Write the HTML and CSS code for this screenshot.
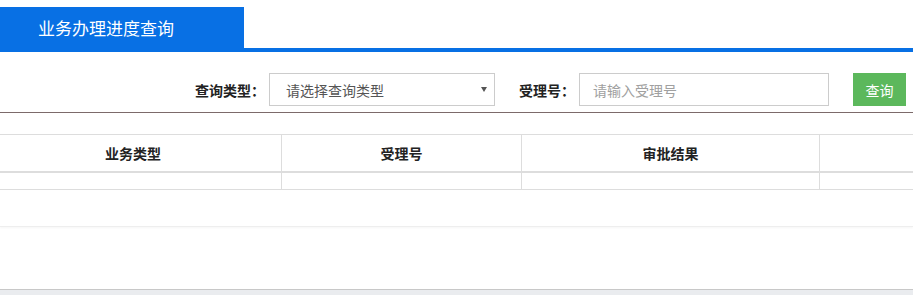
FILE: index.html
```html
<!DOCTYPE html>
<html lang="zh-CN">

<head>
    <meta charset="UTF-8">
    <meta name="viewport" content="width=device-width, initial-scale=1.0">
    <title>业务办理进度查询</title>
    <link rel="stylesheet" href="styles.css">
</head>

<body>
    <div class="page">
        <div class="tab-bar">
            <div class="tab-title">业务办理进度查询</div>
        </div>

        <form class="search-bar" id="search-form">
            <label class="search-label" for="type">查询类型：</label>
            <div class="select-box">
                <select id="type" class="select">
                    <option value="">请选择查询类型</option>
                </select>
            </div>
            <label class="search-label label-gap" for="no">受理号：</label>
            <input type="text" id="no" class="text-input" placeholder="请输入受理号">
            <button type="submit" class="btn-search">查询</button>
        </form>

        <table class="result-table">
            <thead>
                <tr>
                    <th class="col-type">业务类型</th>
                    <th class="col-no">受理号</th>
                    <th class="col-result">审批结果</th>
                    <th></th>
                </tr>
            </thead>
            <tbody>
                <tr>
                    <td></td>
                    <td></td>
                    <td></td>
                    <td></td>
                </tr>
            </tbody>
        </table>

        <div class="pager"></div>
        <div class="footer"></div>
    </div>
</body>

</html>
```

FILE: styles.css
```css
body {
    margin: 0;
    padding: 0;
    font-family: "Noto Sans CJK SC", "Liberation Sans", sans-serif;
    font-size: 14px;
    color: #333;
    background-color: #fff;
}

.page {
    display: flex;
    flex-direction: column;
    height: 295px;
    overflow: hidden;
}

.tab-bar {
    padding-top: 7px;
    border-bottom: 4px solid #0870e4;
}

.tab-title {
    width: 244px;
    height: 41px;
    box-sizing: border-box;
    padding-left: 38px;
    background-color: #0870e4;
    color: #fff;
    font-size: 17px;
    line-height: 41px;
}

.search-bar {
    display: flex;
    justify-content: flex-end;
    align-items: center;
    padding: 21px 7px 6px 0;
    border-bottom: 1px solid #7c6a6a;
}

.search-label {
    font-weight: bold;
    color: #222;
    margin-right: 4px;
}

.label-gap {
    margin-left: 24px;
}

.select-box {
    position: relative;
    width: 226px;
    height: 33px;
}

.select-box::after {
    content: "";
    position: absolute;
    right: 8px;
    top: 14px;
    border-left: 3px solid transparent;
    border-right: 3px solid transparent;
    border-top: 5px solid #555;
}

.select {
    appearance: none;
    -webkit-appearance: none;
    width: 100%;
    height: 33px;
    padding: 0 0 0 16px;
    border: 1px solid #ccc;
    background-color: #fff;
    font-family: inherit;
    font-size: 14px;
    color: #555;
}

.text-input {
    width: 250px;
    height: 33px;
    box-sizing: border-box;
    padding: 0 13px;
    border: 1px solid #ccc;
    font-family: inherit;
    font-size: 14px;
}

.text-input::placeholder {
    color: #a0a0a0;
}

.btn-search {
    width: 53px;
    height: 33px;
    margin-left: 24px;
    border: none;
    background-color: #5cb85c;
    color: #fff;
    font-family: inherit;
    font-size: 14px;
    cursor: pointer;
}

.result-table {
    width: 100%;
    margin-top: 21px;
    border-collapse: collapse;
    table-layout: fixed;
}

.result-table th,
.result-table td {
    border: 1px solid #ddd;
    padding: 0;
}

.result-table th {
    height: 36px;
    border-bottom: 2px solid #ddd;
    font-weight: bold;
    color: #222;
}

.result-table td {
    height: 16px;
}

.result-table th:first-child,
.result-table td:first-child {
    border-left: none;
}

.result-table th:last-child,
.result-table td:last-child {
    border-right: none;
}

.col-type {
    width: 266px;
}

.result-table th.col-type {
    padding-right: 15px;
}

.col-no {
    width: 239px;
}

.col-result {
    width: 297px;
}

.pager {
    height: 36px;
    border-bottom: 1px solid #eee;
    box-shadow: 0 1px 2px rgba(0, 0, 0, 0.04);
}

.footer {
    margin-top: auto;
    height: 5px;
    border-top: 1px solid #c8c8c8;
    background-color: #eaecef;
}
```
